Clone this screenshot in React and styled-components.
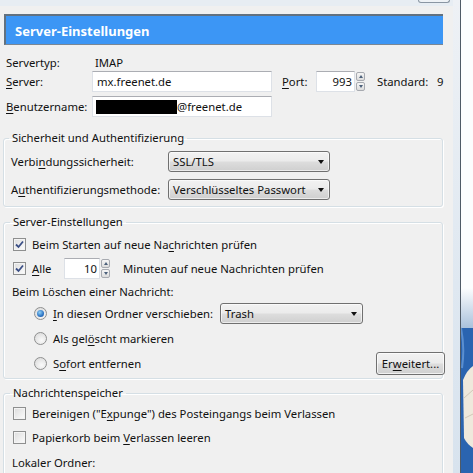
import React from 'react'
import styled, { createGlobalStyle } from 'styled-components'

const GlobalStyle = createGlobalStyle`
  html, body {
    margin: 0;
    padding: 0;
    background: #f0f0f0;
  }
  body {
    font-family: "Noto Sans", "Open Sans", sans-serif;
    font-size: 11.3px;
    color: #111;
  }
`

const Screen = styled.div`
  display: flex;
  width: 473px;
  height: 473px;
  overflow: hidden;
`

const Dialog = styled.div`
  width: 453px;
  display: flex;
  flex-direction: column;
  background: #f0f0f0;
`

const TitleStrip = styled.div`
  height: 6px;
  flex: none;
  background: #e7edf3;
  display: flex;
  justify-content: flex-end;
  padding-right: 3px;
`

const StubButton = styled.div`
  width: 30px;
  height: 2px;
  border: 1px solid #8a96a3;
  border-top: none;
  border-radius: 0 0 3px 3px;
  background: #eef2f6;
`

const Body = styled.div`
  padding: 8px 10px 0 3px;
  display: flex;
  flex-direction: column;
`

const Banner = styled.div`
  height: 31px;
  box-sizing: border-box;
  margin-left: 1px;
  background: #3c96f5;
  border-top: 2px solid #62717f;
  border-left: 2px solid #62717f;
  border-bottom: 1px solid #7a8794;
  color: #fff;
  font-weight: 700;
  font-size: 13px;
  display: flex;
  align-items: center;
  padding-left: 9px;
  padding-top: 2px;
`

const Account = styled.div`
  display: flex;
  flex-direction: column;
  padding-left: 3px;
`

const Row = styled.div`
  display: flex;
  align-items: center;
  height: ${p => p.$h || 21}px;
  gap: ${p => p.$gap || 0}px;
  padding-left: ${p => p.$indent || 0}px;
  margin-top: ${p => p.$mt || 0}px;
  flex: none;
`

const Label = styled.span`
  width: ${p => (p.$w ? `${p.$w}px` : 'auto')};
  margin-left: ${p => p.$ml || 0}px;
  flex: none;
  white-space: nowrap;
`

const U = styled.span`
  text-decoration: underline;
  text-underline-offset: 2px;
`

const Field = styled.div`
  width: ${p => p.$w}px;
  height: 21px;
  box-sizing: border-box;
  background: #fff;
  border: 1px solid #dde1e7;
  border-top-color: #abadb3;
  display: flex;
  align-items: center;
  justify-content: ${p => (p.$right ? 'flex-end' : 'flex-start')};
  padding: 0 ${p => (p.$right ? 2 : 4)}px 0 4px;
  flex: none;
  white-space: nowrap;
`

const Redacted = styled.span`
  display: inline-block;
  width: 81px;
  height: 14px;
  background: #000;
  margin-left: -1px;
`

const SpinBox = styled.div`
  display: flex;
  align-items: center;
  flex: none;
`

const Spinner = styled.div`
  width: 9px;
  height: 19px;
  display: flex;
  flex-direction: column;
  gap: 1px;
  margin-left: 1px;
`

const SpinHalf = styled.div`
  flex: 1;
  border: 1px solid #a7aab0;
  border-radius: 2px;
  background: linear-gradient(#f6f6f6, #dcdcdc);
  display: flex;
  align-items: center;
  justify-content: center;
  &::after {
    content: '';
    border-left: 2.5px solid transparent;
    border-right: 2.5px solid transparent;
    ${p => (p.$down ? 'border-top: 3px solid #4c607a;' : 'border-bottom: 3px solid #4c607a;')}
  }
`

const Group = styled.fieldset`
  margin: ${p => p.$top || 7}px 0 0 0;
  padding: 1px 0 ${p => p.$bottom || 6}px ${p => p.$left || 8}px;
  border: 1px solid #d5dfe5;
  border-radius: 3px;
  box-shadow: inset 1px 1px 0 #fff, 1px 1px 0 #fff;
  min-width: 0;
  width: 440px;
  box-sizing: border-box;
  display: flex;
  flex-direction: column;
`

const Legend = styled.legend`
  padding: 0 3px;
  margin-left: -2px;
  line-height: 16px;
`

const Stack = styled.div`
  display: flex;
  flex-direction: column;
  gap: ${p => p.$gap || 4}px;
  padding-top: ${p => p.$pt || 0}px;
`

const Combo = styled.div`
  width: ${p => p.$w}px;
  height: 21px;
  box-sizing: border-box;
  border: 1px solid #707070;
  border-radius: 3px;
  background: linear-gradient(#f2f2f2 0%, #ebebeb 48%, #dddddd 52%, #cfcfcf 100%);
  box-shadow: inset 0 0 0 1px rgba(255, 255, 255, 0.6);
  display: flex;
  align-items: center;
  justify-content: space-between;
  padding: 0 5px 0 4px;
  flex: none;
  white-space: nowrap;
  &::after {
    content: '';
    border-left: 3.5px solid transparent;
    border-right: 3.5px solid transparent;
    border-top: 4px solid #111;
  }
`

const Box = styled.span`
  width: 13px;
  height: 13px;
  box-sizing: border-box;
  border: 1px solid #8e8f8f;
  background: linear-gradient(135deg, #dcdcdc, #fdfdfd);
  box-shadow: inset 0 0 0 1px #f4f4f4;
  flex: none;
  display: flex;
  align-items: center;
  justify-content: center;
`

const Radio = styled.span`
  width: 13px;
  height: 13px;
  box-sizing: border-box;
  border-radius: 50%;
  border: 1px solid #8e8f8f;
  background: radial-gradient(circle at 60% 65%, #fafafa, #d6d6d6);
  flex: none;
  display: flex;
  align-items: center;
  justify-content: center;
  &::after {
    content: '';
    display: ${p => (p.$on ? 'block' : 'none')};
    width: 7px;
    height: 7px;
    border-radius: 50%;
    background: radial-gradient(circle at 40% 35%, #8fd0f6, #2d74c4 60%, #164f95);
  }
`

const PushButton = styled.div`
  width: 69px;
  height: 23px;
  box-sizing: border-box;
  border: 1px solid #707070;
  border-radius: 3px;
  background: linear-gradient(#f2f2f2 0%, #ebebeb 48%, #dddddd 52%, #cfcfcf 100%);
  box-shadow: inset 0 0 0 1px rgba(255, 255, 255, 0.7);
  display: flex;
  align-items: center;
  justify-content: center;
  flex: none;
  margin-left: auto;
  margin-right: -3px;
`

const Edge = styled.div`
  width: 7px;
  flex: none;
  background: linear-gradient(#eef1f5, #dfe8f1 60%, #d8e3ee);
  border-right: 1px solid #4f5a66;
`

const Desktop = styled.div`
  flex: 1;
  background: #fcfdfe;
  display: flex;
  flex-direction: column;
  justify-content: flex-end;
`

function Check() {
  return (
    <svg width="9" height="9" viewBox="0 0 9 9">
      <path d="M1 4.5 L3.5 7 L8 1.5" fill="none" stroke="#3b4f86" strokeWidth="1.8" />
    </svg>
  )
}

function CheckRow({ checked, mt, children }) {
  return (
    <Row $h={20} $gap={6} $indent={1} $mt={mt}>
      <Box>{checked && <Check />}</Box>
      <Label>{children}</Label>
    </Row>
  )
}

function Logo() {
  return (
    <svg width="12" height="185" viewBox="0 0 12 185">
      <defs>
        <linearGradient id="haze" x1="0" y1="0" x2="0" y2="1">
          <stop offset="0" stopColor="#fcfdfe" />
          <stop offset="1" stopColor="#a9c1dc" />
        </linearGradient>
      </defs>
      <rect x="0" y="0" width="12" height="40" fill="url(#haze)" />
      <rect x="0" y="40" width="12" height="145" fill="#2a64b0" />
      <path d="M2 92 Q6 82 12 78 L12 160 Q6 156 3 150 Z" fill="#efe9dc" />
      <path d="M3 110 L12 102 M4 130 L12 126" stroke="#c9bfae" strokeWidth="0.8" />
      <path d="M0 40 Q4 60 1 80" stroke="#5b8fd0" strokeWidth="2" fill="none" />
    </svg>
  )
}

export default function App() {
  return (
    <>
      <GlobalStyle />
      <Screen>
        <Dialog>
          <TitleStrip>
            <StubButton />
          </TitleStrip>
          <Body>
            <Banner>Server-Einstellungen</Banner>

            <Account>
              <Row $h={18} $mt={8}>
                <Label $w={89}>Servertyp:</Label>
                <Label>IMAP</Label>
              </Row>
              <Row>
                <Label $w={86}><U>S</U>erver:</Label>
                <Field $w={180}>mx.freenet.de</Field>
                <Label $w={34} $ml={10}><U>P</U>ort:</Label>
                <SpinBox>
                  <Field $w={39} $right>993</Field>
                  <Spinner>
                    <SpinHalf />
                    <SpinHalf $down />
                  </Spinner>
                </SpinBox>
                <Label $w={60} $ml={12}>Standard:</Label>
                <Label>9</Label>
              </Row>
              <Row $mt={4}>
                <Label $w={86}><U>B</U>enutzername:</Label>
                <Field $w={180}><Redacted />@freenet.de</Field>
              </Row>
            </Account>

            <Group $top={13} $left={7}>
              <Legend>Sicherheit und Authentifizierung</Legend>
              <Stack $gap={7} $pt={4}>
                <Row>
                  <Label $w={157}>Verbi<U>n</U>dungssicherheit:</Label>
                  <Combo $w={162}>SSL/TLS</Combo>
                </Row>
                <Row>
                  <Label $w={157}>A<U>u</U>thentifizierungsmethode:</Label>
                  <Combo $w={162}>Verschlüsseltes Passwort</Combo>
                </Row>
              </Stack>
            </Group>

            <Group $top={7} $bottom={4} $left={8}>
              <Legend>Server-Einstellungen</Legend>
              <Stack $gap={4} $pt={3}>
                <CheckRow checked>Beim Starten auf neue Na<U>c</U>hrichten prüfen</CheckRow>
                <Row $gap={6} $indent={1}>
                  <Box><Check /></Box>
                  <Label $w={26}><U>A</U>lle</Label>
                  <SpinBox>
                    <Field $w={36} $right>10</Field>
                    <Spinner>
                      <SpinHalf />
                      <SpinHalf $down />
                    </Spinner>
                  </SpinBox>
                  <Label $ml={7}>Minuten auf neue Nachrichten prüfen</Label>
                </Row>
                <Row $h={16}>
                  <Label>Beim Löschen einer Nachricht:</Label>
                </Row>
                <Row $gap={6} $indent={22}>
                  <Radio $on />
                  <Label $w={161}><U>I</U>n diesen Ordner verschieben:</Label>
                  <Combo $w={143}>Trash</Combo>
                </Row>
                <Row $gap={6} $indent={22}>
                  <Radio />
                  <Label>Als gel<U>ö</U>scht markieren</Label>
                </Row>
                <Row $gap={6} $indent={22}>
                  <Radio />
                  <Label>S<U>o</U>fort entfernen</Label>
                  <PushButton>Er<U>w</U>eitert...</PushButton>
                </Row>
              </Stack>
            </Group>

            <Group $top={6} $left={8}>
              <Legend>Nachrichtenspeicher</Legend>
              <Stack $gap={4} $pt={1}>
                <CheckRow>Bereinigen ("E<U>x</U>punge") des Posteingangs beim Verlassen</CheckRow>
                <CheckRow>Papierkorb beim <U>V</U>erlassen leeren</CheckRow>
                <Row $h={20} $mt={1}>
                  <Label>Lokaler Ordner:</Label>
                </Row>
              </Stack>
            </Group>
          </Body>
        </Dialog>
        <Edge />
        <Desktop>
          <Logo />
        </Desktop>
      </Screen>
    </>
  )
}
